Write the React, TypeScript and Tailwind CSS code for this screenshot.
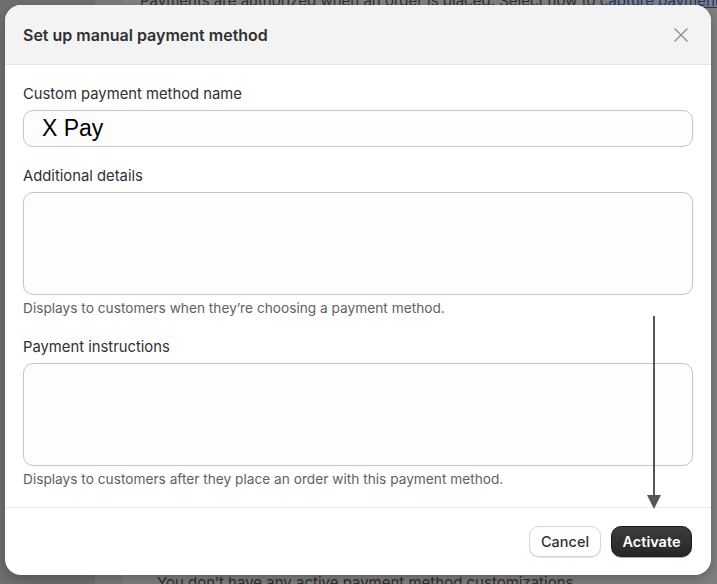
import { X } from 'lucide-react'

function Field({ label, help }: { label: string; help: string }) {
  return (
    <div className="flex flex-col">
      <label className="text-[14.8px] leading-[20px] text-[#303030]">{label}</label>
      <div className="mt-[6px] h-[103px] rounded-[10px] border border-[#c4c4c4] bg-[#fdfdfd]" />
      <p className="mt-[3px] text-[13.7px] leading-[20px] text-[#616161]">{help}</p>
    </div>
  )
}

export default function App() {
  return (
    <div className="relative h-[584px] w-[717px] overflow-hidden bg-[#7e7e7e] font-['Inter',sans-serif]">
      {/* page behind the overlay */}
      <div className="flex h-full">
        <div className="w-[95px] bg-[#6f6f6f]" />
        <div className="w-[28px] bg-[#7a7a7a]" />
        <div className="flex min-w-0 flex-1 flex-col justify-between bg-[#808080] pl-[17px]">
          <p className="-mt-[9px] whitespace-nowrap text-[15px] leading-[20px] text-[#2f2f2f]">
            Payments are authorized when an order is placed. Select how to{' '}
            <span className="text-[#1d3770] underline">capture payments</span>
          </p>
          <p className="-mb-[9px] whitespace-nowrap pl-[17px] text-[15px] leading-[20px] text-[#2f2f2f]">
            You don’t have any active payment method customizations
          </p>
        </div>
      </div>

      {/* modal */}
      <div className="absolute left-[5px] top-[5px] flex h-[570px] w-[706px] flex-col overflow-hidden rounded-[16px] bg-white shadow-[0_4px_12px_rgba(0,0,0,0.25)]">
        <div className="flex h-[60px] items-center justify-between border-b border-[#e3e3e3] bg-[#f3f3f3] px-[18px]">
          <h2 className="text-[16px] font-semibold text-[#303030]">Set up manual payment method</h2>
          <X size={24} strokeWidth={1.3} className="text-[#8a8a8a]" />
        </div>

        <div className="flex flex-1 flex-col gap-[19px] px-[18px] pt-[19px]">
          <div className="flex flex-col">
            <label className="text-[14.8px] leading-[20px] text-[#303030]">Custom payment method name</label>
            <div className="mt-[6px] flex h-[37px] items-center rounded-[10px] border border-[#c4c4c4] bg-[#fdfdfd] pl-[18px]">
              <span className="font-['Liberation_Sans',Arial,sans-serif] text-[23px] text-black">X Pay</span>
            </div>
          </div>
          <Field label="Additional details" help="Displays to customers when they’re choosing a payment method." />
          <Field label="Payment instructions" help="Displays to customers after they place an order with this payment method." />
        </div>

        <div className="flex h-[68px] items-center justify-end gap-[10px] border-t border-[#ebebeb] pr-[19px]">
          <button className="h-[31px] w-[72px] rounded-[10px] border border-[#d6d6d6] bg-white text-[14.5px] font-medium text-[#303030] shadow-[0_1px_0_rgba(0,0,0,0.12)]">
            Cancel
          </button>
          <button className="h-[31px] w-[81px] rounded-[10px] border border-[#1a1a1a] bg-gradient-to-b from-[#3d3d3d] to-[#262626] text-[14.5px] font-semibold text-white shadow-[0_1px_0_rgba(0,0,0,0.3)]">
            Activate
          </button>
        </div>

        {/* annotation arrow */}
        <svg className="absolute left-[642px] top-[311px]" width="14" height="193" viewBox="0 0 14 193">
          <line x1="7" y1="0" x2="7" y2="180" stroke="#555" strokeWidth="2" />
          <polygon points="0,179 14,179 7,193" fill="#555" />
        </svg>
      </div>
    </div>
  )
}
